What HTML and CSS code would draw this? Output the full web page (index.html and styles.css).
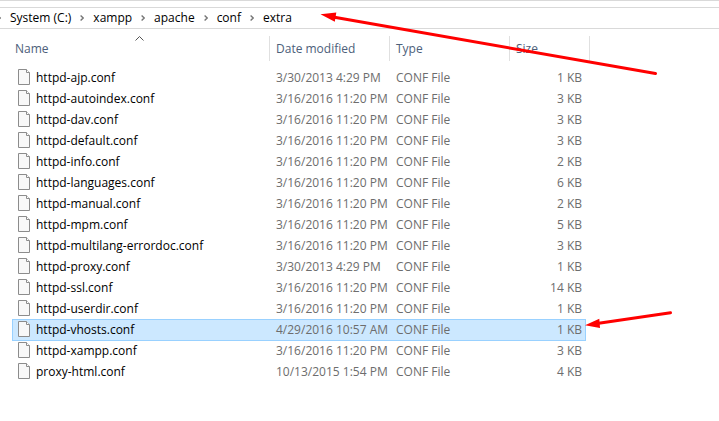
FILE: index.html
```
<!DOCTYPE html>
<html lang="en">
<head>
<meta charset="utf-8">
<title>extra</title>
<link rel="stylesheet" href="styles.css">
</head>
<body>
<svg class="defs" aria-hidden="true">
  <symbol id="file" viewBox="0 0 12 16">
    <path d="M.5.5h8l3 3v12H.5z" fill="#f8f8f8" stroke="#8c8c8c"/>
    <path d="M8.500.5v3h3" fill="#fff" stroke="#8c8c8c"/>
  </symbol>
  <symbol id="chevron" viewBox="0 0 4 6">
    <path d="M.6.5 3.200 3 .6 5.500" fill="none" stroke="#777" stroke-width="1.400"/>
  </symbol>
</svg>
<nav class="address" aria-label="Path">
  <svg class="chevron"><use href="#chevron"/></svg>
  <a href="#">System (C:)</a>
  <svg class="chevron"><use href="#chevron"/></svg>
  <a href="#">xampp</a>
  <svg class="chevron"><use href="#chevron"/></svg>
  <a href="#">apache</a>
  <svg class="chevron"><use href="#chevron"/></svg>
  <a href="#">conf</a>
  <svg class="chevron"><use href="#chevron"/></svg>
  <a href="#">extra</a>
</nav>
<main>
  <table class="files">
    <colgroup><col class="col-name"><col class="col-date"><col class="col-type"><col class="col-size"></colgroup>
    <thead>
      <tr>
        <th aria-sort="ascending">Name<svg class="sort" viewBox="0 0 9 5"><path d="M.5 4.500l4-4 4 4" fill="none" stroke="#555"/></svg></th>
        <th>Date modified</th><th>Type</th><th>Size</th>
      </tr>
    </thead>
    <tbody>
      <tr><td><svg class="icon"><use href="#file"/></svg>httpd-ajp.conf</td><td>3/30/2013 4:29 PM</td><td>CONF File</td><td>1 KB</td></tr>
      <tr><td><svg class="icon"><use href="#file"/></svg>httpd-autoindex.conf</td><td>3/16/2016 11:20 PM</td><td>CONF File</td><td>3 KB</td></tr>
      <tr><td><svg class="icon"><use href="#file"/></svg>httpd-dav.conf</td><td>3/16/2016 11:20 PM</td><td>CONF File</td><td>3 KB</td></tr>
      <tr><td><svg class="icon"><use href="#file"/></svg>httpd-default.conf</td><td>3/16/2016 11:20 PM</td><td>CONF File</td><td>3 KB</td></tr>
      <tr><td><svg class="icon"><use href="#file"/></svg>httpd-info.conf</td><td>3/16/2016 11:20 PM</td><td>CONF File</td><td>2 KB</td></tr>
      <tr><td><svg class="icon"><use href="#file"/></svg>httpd-languages.conf</td><td>3/16/2016 11:20 PM</td><td>CONF File</td><td>6 KB</td></tr>
      <tr><td><svg class="icon"><use href="#file"/></svg>httpd-manual.conf</td><td>3/16/2016 11:20 PM</td><td>CONF File</td><td>2 KB</td></tr>
      <tr><td><svg class="icon"><use href="#file"/></svg>httpd-mpm.conf</td><td>3/16/2016 11:20 PM</td><td>CONF File</td><td>5 KB</td></tr>
      <tr><td><svg class="icon"><use href="#file"/></svg>httpd-multilang-errordoc.conf</td><td>3/16/2016 11:20 PM</td><td>CONF File</td><td>3 KB</td></tr>
      <tr><td><svg class="icon"><use href="#file"/></svg>httpd-proxy.conf</td><td>3/30/2013 4:29 PM</td><td>CONF File</td><td>1 KB</td></tr>
      <tr><td><svg class="icon"><use href="#file"/></svg>httpd-ssl.conf</td><td>3/16/2016 11:20 PM</td><td>CONF File</td><td>14 KB</td></tr>
      <tr><td><svg class="icon"><use href="#file"/></svg>httpd-userdir.conf</td><td>3/16/2016 11:20 PM</td><td>CONF File</td><td>1 KB</td></tr>
      <tr class="selected"><td><svg class="icon"><use href="#file"/></svg>httpd-vhosts.conf</td><td>4/29/2016 10:57 AM</td><td>CONF File</td><td>1 KB</td></tr>
      <tr><td><svg class="icon"><use href="#file"/></svg>httpd-xampp.conf</td><td>3/16/2016 11:20 PM</td><td>CONF File</td><td>3 KB</td></tr>
      <tr><td><svg class="icon"><use href="#file"/></svg>proxy-html.conf</td><td>10/13/2015 1:54 PM</td><td>CONF File</td><td>4 KB</td></tr>
    </tbody>
  </table>
</main>
<svg class="arrows" width="719" height="421" aria-hidden="true">
  <g stroke="#f00" stroke-width="3" stroke-linecap="round">
    <path d="M333 17 655.500 73.500"/>
    <path d="M597 323.500 670.500 312.800"/>
  </g>
  <path d="M320.500 14.300 336.300 12.500 334.800 21.800zM585 325.300 599.300 318.700 600 328z" fill="#f00"/>
</svg>
</body>
</html>
```
FILE: styles.css
```
* { box-sizing: border-box; }
body {
  margin: 0;
  border-top: 1px solid #d9d9d9;
  background: #fff;
  color: #000;
  font: 12px/20px "Open Sans", "Noto Sans", sans-serif;
}
.defs { position: absolute; width: 0; height: 0; }
.address {
  display: flex;
  align-items: center;
  gap: 9px;
  height: 22px;
  margin-top: 6px;
  margin-left: -3px;
  border: solid #d9d9d9;
  border-width: 1px 0;
}
.address a { color: #000; text-decoration: none; }
.chevron { flex: none; width: 4px; height: 6px; }
.files {
  table-layout: fixed;
  width: 574px;
  margin: 7px 0 0 12px;
  border-collapse: separate;
  border-spacing: 0;
}
.col-name { width: 258px; }
.col-date, .col-type { width: 120px; }
.col-size { width: 76px; }
th {
  position: relative;
  height: 25px;
  padding: 0 6px;
  border-right: 1px solid #e0e0e0;
  color: #4c607a;
  font-weight: 400;
  text-align: left;
}
th:first-child { padding-left: 3px; }
th:last-child { border-right: 0; }
th:last-child::after {
  content: "";
  position: absolute;
  top: 0;
  right: -4px;
  width: 1px;
  height: 100%;
  background: #e0e0e0;
}
.sort { position: absolute; top: 0; left: 123px; width: 9px; height: 5px; }
tbody::before { content: ""; display: block; height: 6px; }
td {
  height: 21px;
  padding: 0 6px;
  color: #6d6d6d;
  line-height: 19px;
  white-space: nowrap;
}
td:first-child { color: #000; }
td:last-child { padding-right: 4px; text-align: right; }
.icon {
  width: 12px;
  height: 16px;
  margin: -3px 6px 0 0;
  vertical-align: middle;
}
.selected td {
  background: #cce8ff;
  box-shadow: inset 0 1px #99d1ff, 0 1px #99d1ff;
}
.selected td:first-child { box-shadow: inset 1px 1px #99d1ff, 0 1px #99d1ff; }
.selected td:last-child { box-shadow: inset -1px 1px #99d1ff, 0 1px #99d1ff; }
.arrows { position: absolute; top: 0; left: 0; pointer-events: none; }
```
